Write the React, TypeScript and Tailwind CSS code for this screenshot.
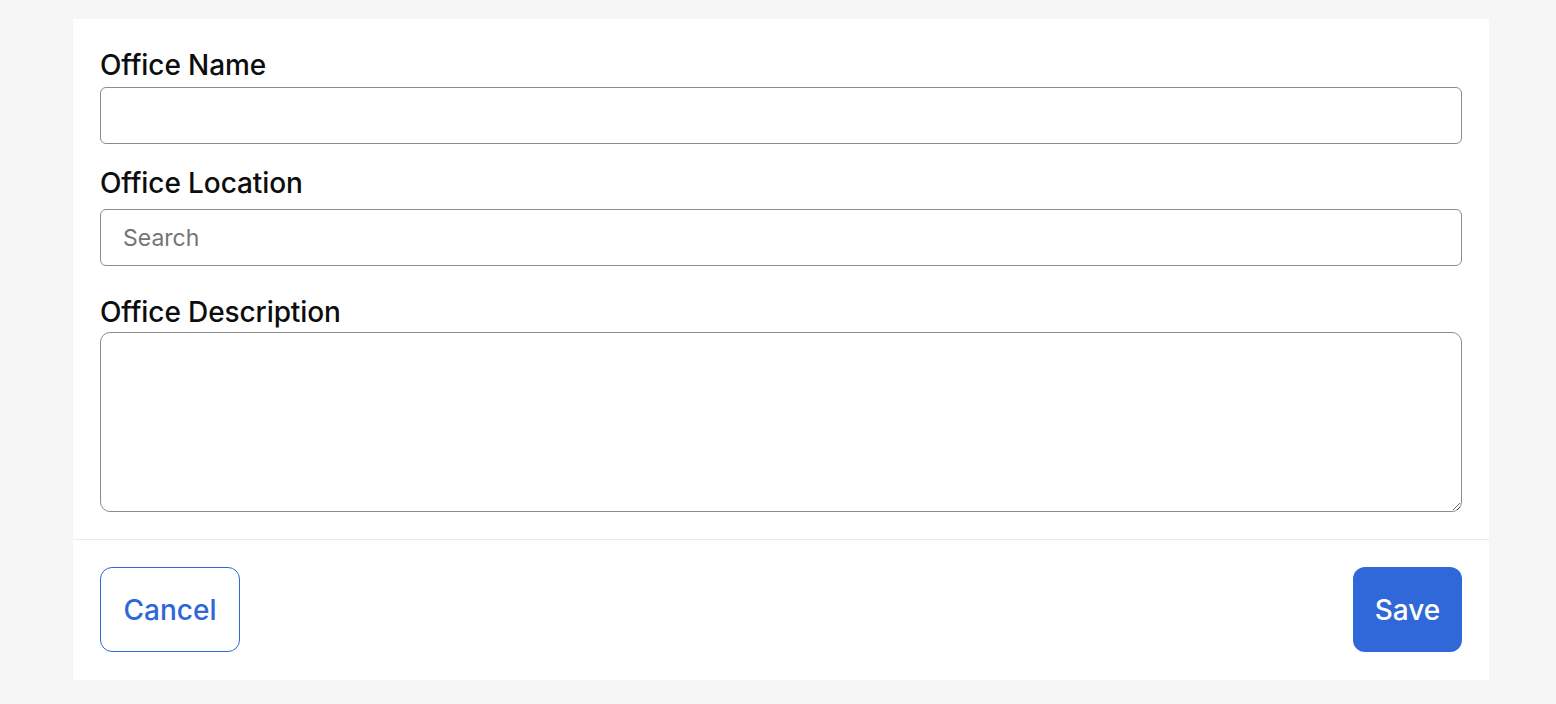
import React from "react";

export default function App() {
  return (
    <div className="min-h-[704px] bg-[#f6f6f6] px-[73px] pt-[19px] font-['Inter','Liberation_Sans',sans-serif]">
      <div className="w-[1416px] bg-white">
        <form className="px-[27px] pt-[30px] pb-[27px]">
          {/* Office Name */}
          <label className="block text-[28px] leading-[32px] font-medium tracking-[-0.1px] text-[#0d0d0d] mb-[6px]">
            Office Name
          </label>
          <input
            type="text"
            className="block w-full h-[57px] rounded-[6px] border border-[#8c8c8c] px-[22px] text-[23px] outline-none"
          />

          {/* Office Location */}
          <label className="block mt-[23px] text-[28px] leading-[32px] font-medium tracking-[-0.1px] text-[#0d0d0d] mb-[10px]">
            Office Location
          </label>
          <input
            type="text"
            placeholder="Search"
            className="block w-full h-[57px] rounded-[6px] border border-[#8c8c8c] px-[22px] text-[23px] text-[#222] placeholder:text-[#757575] outline-none"
          />

          {/* Office Description */}
          <label className="block mt-[30px] text-[28px] leading-[32px] font-medium tracking-[-0.1px] text-[#0d0d0d] mb-[4px]">
            Office Description
          </label>
          <textarea className="block w-full h-[180px] rounded-[10px] border border-[#8c8c8c] px-[22px] py-[14px] text-[23px] outline-none" />
        </form>

        <div className="border-t border-[#ebebeb] px-[27px] pt-[27px] pb-[28px] flex items-center justify-between">
          <button
            type="button"
            className="h-[85px] w-[140px] rounded-[12px] border border-[#2f67d8] bg-white text-[28px] font-medium text-[#2f67d8]"
          >
            Cancel
          </button>
          <button
            type="submit"
            className="h-[85px] w-[109px] rounded-[12px] bg-[#3168d9] text-[28px] font-medium text-white"
          >
            Save
          </button>
        </div>
      </div>
    </div>
  );
}
